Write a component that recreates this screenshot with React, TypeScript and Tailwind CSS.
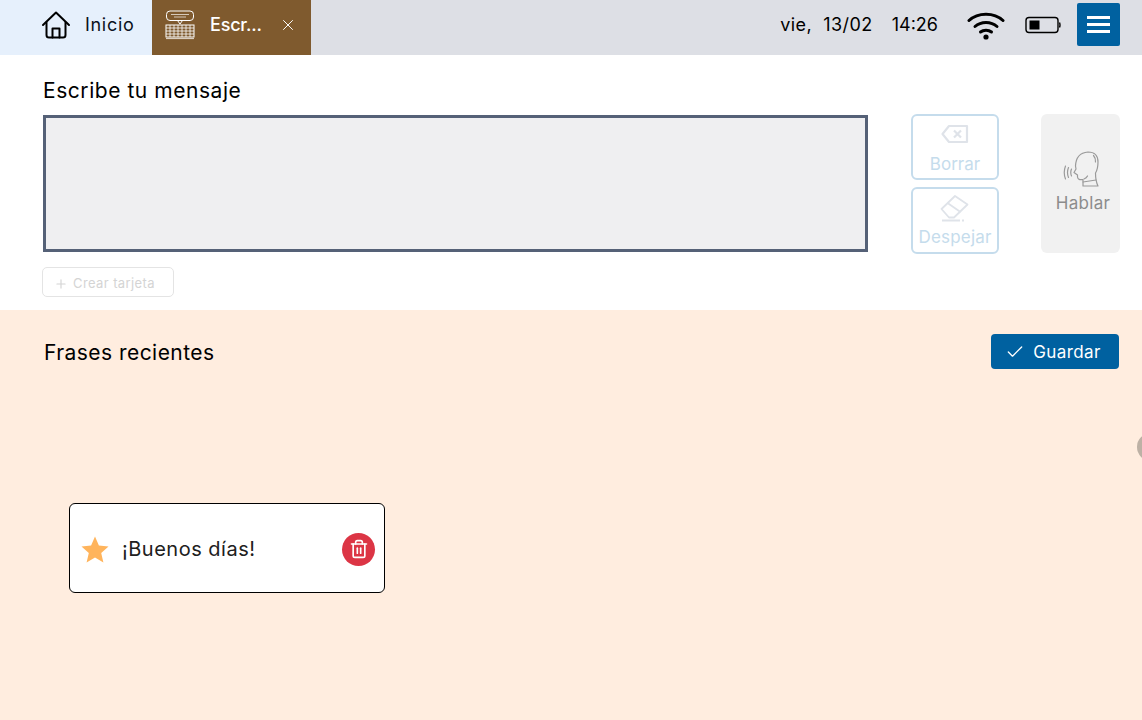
import { Check, Plus, Trash2, X } from "lucide-react";

const font = "font-['Inter','Liberation_Sans',sans-serif]";

function HomeIcon() {
    return (
        <svg width="30" height="30" viewBox="0 0 30 30" fill="none" stroke="#000" strokeWidth="2" strokeLinejoin="round" strokeLinecap="round">
            <path d="M2 15 L15 2.5 L28 15" />
            <path d="M5.5 12.5 V25 Q5.5 27.5 8 27.5 H22 Q24.5 27.5 24.5 25 V12.5" />
            <path d="M11.5 27.5 V18.5 H18.5 V27.5" />
        </svg>
    );
}

function KeyboardChatIcon() {
    return (
        <svg width="30" height="30" viewBox="0 0 30 30" fill="none" stroke="#fff" strokeWidth="1">
            <rect x="1.5" y="1" width="27" height="9.5" rx="3.5" />
            <path d="M6 4.5 H24 M9 7 H21" strokeWidth="0.8" opacity="0.85" />
            <path d="M12.5 10.5 L15 14 L17.5 10.5" />
            <rect x="1" y="15" width="28" height="12" />
            <path d="M1 18 H29 M1 21 H29 M1 24 H29 M5 15 V27 M9 15 V27 M13 15 V27 M17 15 V27 M21 15 V27 M25 15 V27" strokeWidth="0.8" />
            <path d="M1 28.5 H29" strokeWidth="1.2" opacity="0.7" />
        </svg>
    );
}

function WifiIcon() {
    return (
        <svg width="38" height="30" viewBox="0 0 38 30" fill="none" stroke="#000" strokeWidth="3" strokeLinecap="round">
            <path d="M2 10.5 C11 2 27 2 36 10.5" />
            <path d="M8 16.5 C14 11 24 11 30 16.5" />
            <path d="M13.5 22 C16.5 19.5 21.5 19.5 24.5 22" />
            <circle cx="19" cy="27" r="2.6" fill="#000" stroke="none" />
        </svg>
    );
}

function BatteryIcon() {
    return (
        <svg width="36" height="18" viewBox="0 0 36 18" fill="none">
            <rect x="1" y="1.5" width="32" height="15" rx="3" stroke="#000" strokeWidth="1.4" />
            <rect x="4.5" y="4.5" width="10" height="9" fill="#000" />
            <path d="M34.5 6.5 Q35.5 9 34.5 11.5" stroke="#000" strokeWidth="1.4" />
        </svg>
    );
}

function BackspaceIcon() {
    return (
        <svg width="28" height="20" viewBox="0 0 28 20" fill="none" stroke="#dfe3e9" strokeWidth="2.2" strokeLinejoin="round">
            <path d="M8 2 H26 V18 H8 L1.5 10 Z" />
            <path d="M13 6.5 L20 13.5 M20 6.5 L13 13.5" />
        </svg>
    );
}

function EraserIcon() {
    return (
        <svg width="30" height="28" viewBox="0 0 30 28" fill="none" stroke="#dfe3e9" strokeWidth="1.8" strokeLinejoin="round">
            <path d="M1.5 15 L15 2 L27.5 10.5 L14 23.5 H9 Z" />
            <path d="M7.5 9 L20.5 18" />
            <path d="M2 26.5 H26" strokeDasharray="18 2 2 2" />
        </svg>
    );
}

function SpeakIcon() {
    return (
        <svg width="36" height="36" viewBox="0 0 36 36" fill="none" stroke="#9a9a9a" strokeWidth="1.2" strokeLinecap="round" strokeLinejoin="round">
            <path d="M12.5 15 Q13 2 25 1 Q35 1 35 11 Q35 18 32.5 22 Q32.5 30 35 35 H20 V28.5 Q15 29.5 14.5 26 V24 L11 21.5 L13 18 Z" />
            <path d="M20 31 L33 29 M21 28 Q23.5 27 24.5 25" />
            <path d="M30.5 4.5 Q33 7.5 32.5 11" />
            <path d="M8.5 18 Q7 21.5 8.5 25 M5.5 16.5 Q3.5 21.5 5.5 26.5 M2.5 15 Q0 21.5 2.5 28" />
        </svg>
    );
}

export default function App() {
    return (
        <div className={`${font} relative h-[720px] w-[1142px] overflow-hidden flex flex-col bg-white text-black`}>
            <header className="h-[55px] flex items-stretch bg-[#dddfe5]">
                <div className="w-[152px] flex items-center bg-[#e6f0fc] pl-[41px] pb-[6px] gap-[14px]">
                    <HomeIcon />
                    <span className="text-[18px] tracking-[0.7px] text-[#0b1220]">Inicio</span>
                </div>
                <div className="w-[159px] flex items-center bg-[#7f5a2e] pl-[13px] pb-[6px] text-white">
                    <KeyboardChatIcon />
                    <span className="ml-[15px] w-[60px] text-[18px] font-medium tracking-[-0.2px]">Escr...</span>
                    <X size={18} className="ml-[9px]" strokeWidth={1.3} />
                </div>
                <div className="ml-auto flex items-center pr-[22px] pb-[6px]">
                    <span className="text-[18px] tracking-[0.45px] whitespace-pre">vie,  13/02</span>
                    <span className="ml-[19px] text-[18px]">14:26</span>
                    <div className="ml-[29px]"><WifiIcon /></div>
                    <div className="ml-[20px]"><BatteryIcon /></div>
                    <button className="ml-[16px] w-[43px] h-[43px] flex flex-col items-center justify-center gap-[4px] rounded-[2px] bg-[#0061a0]">
                        <span className="w-[23px] h-[3px] bg-white" />
                        <span className="w-[23px] h-[3px] bg-white" />
                        <span className="w-[23px] h-[3px] bg-white" />
                    </button>
                </div>
            </header>

            <section className="h-[255px] pl-[43px] pr-[22px] flex flex-col">
                <h2 className="mt-[22px] h-[28px] leading-[28px] text-[21px] tracking-[0.55px]">Escribe tu mensaje</h2>
                <div className="mt-[9px] flex items-start">
                    <div className="w-[825px] h-[137px] mt-[1px] border-[3px] border-[#556177] bg-[#efeff1]" />
                    <div className="ml-[43px] w-[88px] flex flex-col gap-[7px]">
                        <button className="h-[66px] flex flex-col items-center justify-center gap-[11px] pt-[2px] rounded-[6px] border-2 border-[#c5dcec] text-[17px] text-[#c5dcec]">
                            <BackspaceIcon />
                            <span className="leading-[18px]">Borrar</span>
                        </button>
                        <button className="h-[67px] flex flex-col items-center justify-center gap-[4px] pt-[1px] rounded-[6px] border-2 border-[#c5dcec] text-[17px] tracking-[0.2px] text-[#c5dcec]">
                            <EraserIcon />
                            <span className="leading-[22px]">Despejar</span>
                        </button>
                    </div>
                    <button className="ml-[42px] w-[79px] h-[139px] flex flex-col items-center justify-center gap-[4px] pt-[1px] rounded-[6px] bg-[#f1f1f1] text-[17px] tracking-[0.3px] text-[#8c8c8c]">
                        <SpeakIcon />
                        <span className="pl-[5px]">Hablar</span>
                    </button>
                </div>
                <button className="mt-[13px] -ml-[1px] w-[132px] h-[30px] flex items-center justify-center gap-[5px] pt-[3px] pr-[7px] rounded-[5px] border border-[#e4e4e4] text-[13px] tracking-[0.4px] text-[#d4d4d4]">
                    <Plus size={14} />
                    <span>Crear tarjeta</span>
                </button>
            </section>

            <section className="flex-1 bg-[#ffeddf] pl-[44px] pr-[23px]">
                <div className="mt-[24px] flex items-center justify-between">
                    <h2 className="pt-[2px] text-[21px] tracking-[0.45px]">Frases recientes</h2>
                    <button className="w-[128px] h-[35px] flex items-center justify-center gap-[8px] pr-[4px] rounded-[4px] bg-[#0061a0] text-[17px] tracking-[0.4px] text-white">
                        <Check size={20} strokeWidth={1.6} />
                        <span className="pt-[2px]">Guardar</span>
                    </button>
                </div>
                <div className="mt-[134px] ml-[25px] w-[316px] h-[90px] flex items-center rounded-[6px] border border-black bg-white pt-[2px] pl-[11px] pr-[9px]">
                    <svg width="28" height="27" viewBox="0 0 28 27" fill="#ffb45c">
                        <path d="M14 0.5 L17.9 9.6 L27.5 10.5 L20.2 17 L22.4 26.5 L14 21.4 L5.6 26.5 L7.8 17 L0.5 10.5 L10.1 9.6 Z" />
                    </svg>
                    <span className="ml-[13px] text-[20px] tracking-[0.5px] text-[#202020]">¡Buenos días!</span>
                    <div className="ml-auto w-[33px] h-[33px] flex items-center justify-center rounded-full bg-[#dc3545] text-white">
                        <Trash2 size={20} strokeWidth={2} />
                    </div>
                </div>
            </section>

            <div className="absolute left-[1137px] top-[433px] w-[28px] h-[28px] rounded-full bg-[#bdb1a5]" />
        </div>
    );
}
